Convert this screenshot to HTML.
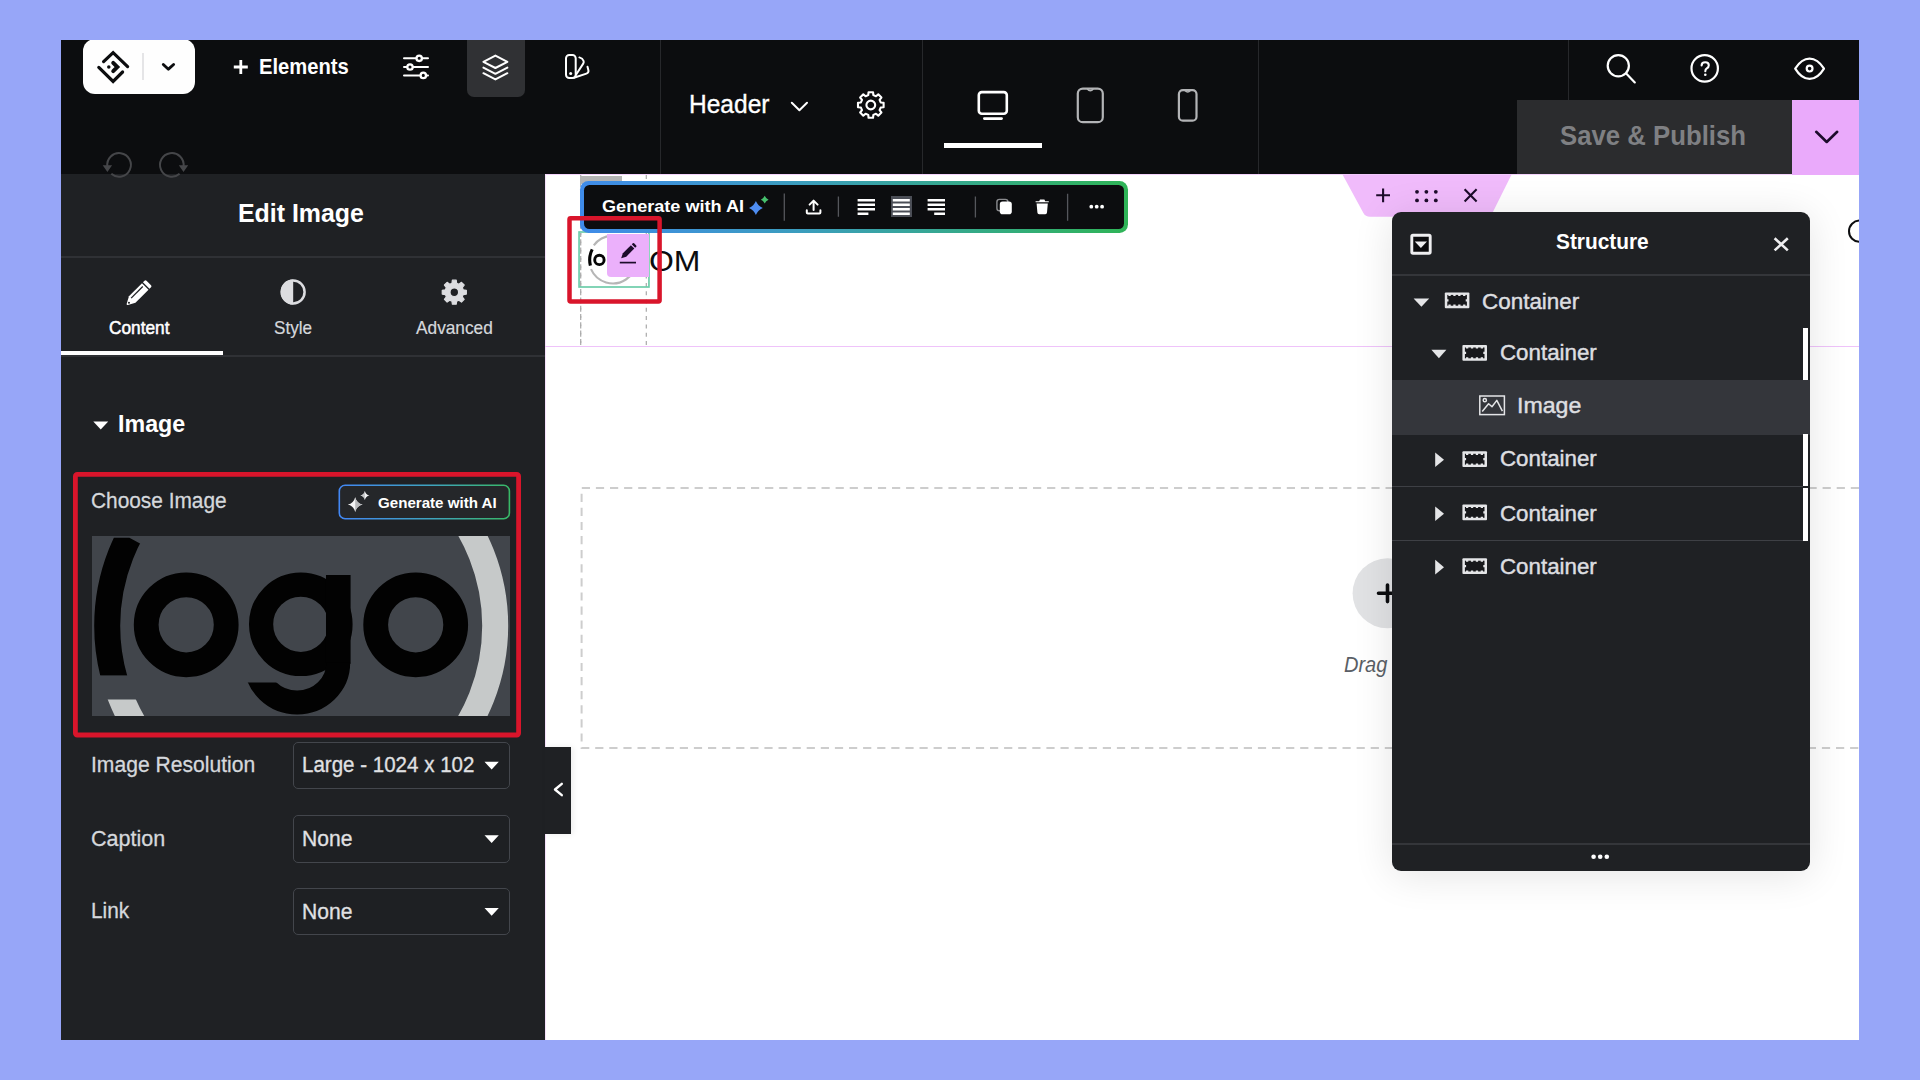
<!DOCTYPE html>
<html>
<head>
<meta charset="utf-8">
<style>
*{box-sizing:border-box;margin:0;padding:0}
html,body{width:1920px;height:1080px;overflow:hidden}
body{background:#97a6f8;font-family:"Liberation Sans",sans-serif;position:relative}
.a{position:absolute}
.t{position:absolute;white-space:nowrap;line-height:1}
svg{position:absolute;overflow:visible}
.vdiv{position:absolute;top:40px;width:1.3px;height:134px;background:#27282b}
</style>
</head>
<body>
<!-- base surfaces -->
<div class="a" style="left:61px;top:40px;width:1798px;height:1000px;background:#fff"></div>
<div class="a" id="topbar" style="left:61px;top:40px;width:1798px;height:134px;background:#0c0d0f"></div>
<!--CANVAS-->
<div class="a" style="left:545px;top:174px;width:1314px;height:1px;background:#f3d2fb"></div>
<div class="a" style="left:545px;top:174px;width:1px;height:866px;background:#f6e0fb"></div>
<div class="a" style="left:545px;top:345.5px;width:1314px;height:1.3px;background:#efc3fa"></div>
<!-- dashed add-section box -->
<svg style="left:0;top:0" width="1859" height="1080" viewBox="0 0 1859 1080">
 <path d="M1859 488 H581.6 V748 H1859" fill="none" stroke="#cdcdcd" stroke-width="2" stroke-dasharray="8.2 5.9"/>
 <!-- column guides -->
 <path d="M580.7 175 V346 M646.3 175 V346" fill="none" stroke="#a9a9a9" stroke-width="1.2" stroke-dasharray="4 4.3"/>
 <!-- plus circle -->
 <circle cx="1387.6" cy="593.3" r="35" fill="#e1e2e4"/>
 <path d="M1378.5 593.2H1396.6M1387.5 585V601.6" stroke="#0c0d0f" stroke-width="3.6" stroke-linecap="round" fill="none"/>
 <!-- right partial circle -->
</svg>
<svg style="left:1840px;top:210px;overflow:hidden" width="19" height="44" viewBox="1840 210 19 44"><circle cx="1859.6" cy="231.2" r="10.6" fill="#fff" stroke="#0c0d0f" stroke-width="2"/></svg>
<div class="t" style="left:1344.00px;top:654.25px;font-size:22.17px;font-weight:normal;font-style:italic;color:#5a5f66;transform:scaleX(0.9035);transform-origin:0 0;">Drag</div>
<!-- pink container handle -->
<svg style="left:0;top:0" width="1920" height="1080" viewBox="0 0 1920 1080">
 <path d="M1342.5 174.6 H1511.6 L1492.4 213 Q1490.4 216.8 1486 216.8 H1370 Q1365.4 216.8 1363.4 213Z" fill="#f0bbfb"/>
 <path d="M1383.1 188.4V202.2M1376.2 195.3H1390" stroke="#1d0c2b" stroke-width="2.1" fill="none"/>
 <g fill="#1d0c2b"><circle cx="1417" cy="191.8" r="1.9"/><circle cx="1426.4" cy="191.8" r="1.9"/><circle cx="1435.8" cy="191.8" r="1.9"/><circle cx="1417" cy="200.4" r="1.9"/><circle cx="1426.4" cy="200.4" r="1.9"/><circle cx="1435.8" cy="200.4" r="1.9"/></g>
 <path d="M1464.6 189.2L1476.6 201.4M1476.6 189.2L1464.6 201.4" stroke="#1d0c2b" stroke-width="2.1" fill="none"/>
</svg>
<!-- selection + mini logo -->
<svg style="left:0;top:0" width="1920" height="1080" viewBox="0 0 1920 1080"><rect x="579.05" y="232" width="69.9" height="55" fill="none" stroke="#6dcdaa" stroke-width="1.7"/></svg>
<svg style="left:0;top:0" width="1920" height="1080" viewBox="0 0 1920 1080">
 <g fill="none">
  <path d="M593.8 245.3 A23.8 23.8 0 1 1 591 269.2" stroke="#b6b6b6" stroke-width="2.1"/>
  <path d="M592.2 249.4 A23.4 23.4 0 0 0 590.4 265.6" stroke="#050505" stroke-width="3.1"/>
  <circle cx="599.4" cy="259.9" r="4.7" stroke="#050505" stroke-width="2.9"/>
 </g>
 <path d="M580.7 233 V346" fill="none" stroke="#a9a9a9" stroke-width="1.2" stroke-dasharray="4 4.3" stroke-dashoffset="2"/>
</svg>
<div class="a" style="left:606.8px;top:234.3px;width:42.7px;height:42.4px;background:#ebb0fb;border-radius:0 0 0 4px"></div>
<svg style="left:0;top:0" width="1920" height="1080" viewBox="0 0 1920 1080">
 <g transform="translate(628.1 251.4) rotate(45)" fill="#1d0c2b"><path d="M-2.4 -9.1 Q-2.4 -10 -1.5 -10 H1.5 Q2.4 -10 2.4 -9.1 V-7.6 H-2.4Z"/><path d="M-2.4 -6.4 H2.4 V5 L0 9.8 L-2.4 5Z"/></g>
 <path d="M619.8 262.6 H636" stroke="#1d0c2b" stroke-width="1.7" fill="none"/>
</svg>
<div class="t" style="left:648.74px;top:245.88px;font-size:30.14px;font-weight:normal;font-style:normal;color:#0c0d0f;transform:scaleX(1.0609);transform-origin:0 0;">OM</div>
<!-- element toolbar -->
<div class="a" style="left:580.3px;top:175.8px;width:42.2px;height:8px;background:#b4b4b4"></div>
<div class="a" style="left:580.3px;top:180.8px;width:547.3px;height:52.2px;border-radius:8.5px;background:linear-gradient(90deg,#3f8be9 0%,#3b9dbe 40%,#35a98a 70%,#2fb457 100%)"></div>
<div class="a" style="left:584px;top:184.8px;width:539.8px;height:44.3px;border-radius:5.5px;background:#0c0d0f"></div>
<div class="a" style="left:890.8px;top:196.3px;width:20.9px;height:20.8px;background:#4b4e56"></div>
<svg style="left:0;top:0" width="1920" height="1080" viewBox="0 0 1920 1080">
 <!-- dividers -->
 <path d="M784.3 193.4V220.8M1067.6 193.8V220.8" stroke="#55575c" stroke-width="1.3" fill="none"/>
 <path d="M838.4 196.6V216.8M975.4 196.4V217.5" stroke="#55575c" stroke-width="1.3" fill="none"/>
 <!-- sparkle -->
 <path d="M755.9 201.1 Q757.97 205.93 762.8 208 Q757.97 210.07 755.9 214.9 Q753.83 210.07 749.0 208 Q753.83 205.93 755.9 201.1Z" fill="#4e8df2"/>
 <path d="M764.7 195.79999999999998 Q765.87 198.53 768.6 199.7 Q765.87 200.87 764.7 203.6 Q763.53 200.87 760.8000000000001 199.7 Q763.53 198.53 764.7 195.79999999999998Z" fill="#46c06d"/>
 <!-- upload -->
 <g stroke="#fff" stroke-width="2" fill="none" stroke-linecap="round" stroke-linejoin="round"><path d="M813.6 210V201M809.6 204.6L813.6 200.6L817.6 204.6"/><path d="M806.8 210.2V212.4Q806.8 213.4 807.8 213.4H819.4Q820.4 213.4 820.4 212.4V210.2"/></g>
 <!-- align icons -->
 <g stroke="#fff" stroke-width="2.5" fill="none">
  <path d="M857.6 200.3H875M857.6 204.8H875M857.6 209.3H875M857.6 213.7H868.4"/>
  <path d="M892.8 200.3H909.8M892.8 204.8H909.8M892.8 209.3H909.8M892.8 213.7H909.8"/>
  <path d="M927.6 200.3H945M927.6 204.8H945M927.6 209.3H945M934.2 213.7H945"/>
 </g>
 <!-- copy -->
 <rect x="996.9" y="199.4" width="11" height="11.4" rx="2.6" fill="none" stroke="#8b8c8f" stroke-width="1.4"/>
 <rect x="999.8" y="201.6" width="12" height="12.6" rx="2.8" fill="#fff"/>
 <!-- trash -->
 <path d="M1035.6 202.3H1048.8V201.2H1045.2L1044.4 199.6H1040L1039.2 201.2H1035.6Z" fill="#fff"/>
 <path d="M1036.6 203.6H1047.8L1047 212.6Q1046.9 214.2 1045.3 214.2H1039.1Q1037.5 214.2 1037.4 212.6Z" fill="#fff"/>
 <!-- dots -->
 <g fill="#fff"><circle cx="1091.3" cy="206.7" r="1.9"/><circle cx="1096.7" cy="206.7" r="1.9"/><circle cx="1102.1" cy="206.7" r="1.9"/></g>
</svg>
<div class="t" style="left:601.70px;top:198.89px;font-size:16.96px;font-weight:bold;font-style:normal;color:#fff;transform:scaleX(1.0681);transform-origin:0 0;">Generate with AI</div>
<!-- red highlight around image -->
<svg style="left:0;top:0" width="1920" height="1080" viewBox="0 0 1920 1080"><rect x="569.5" y="218.3" width="90.1" height="83.1" rx="1.2" fill="none" stroke="#d9152b" stroke-width="4.5"/></svg>

<!--PANEL-->
<div class="a" id="panel" style="left:61px;top:174px;width:484px;height:866px;background:#1f2124"></div>
<div class="a" style="left:61px;top:256px;width:484px;height:1.5px;background:#2f3135"></div>
<div class="a" style="left:61px;top:355px;width:484px;height:1.5px;background:#2f3135"></div>
<div class="a" style="left:61px;top:350.6px;width:162px;height:4.6px;background:#fff"></div>
<!-- collapse handle -->
<div class="a" style="left:545px;top:747px;width:26.3px;height:87px;background:#1f2124;box-shadow:2px 0 6px rgba(0,0,0,.08)"></div>
<svg style="left:0;top:0" width="1920" height="1080" viewBox="0 0 1920 1080">
 <path d="M561.8 783.8 L555 789.5 L561.8 795.2" fill="none" stroke="#fff" stroke-width="2.4" stroke-linecap="round" stroke-linejoin="round"/>
 <!-- undo / redo -->
 <g fill="none" stroke="#454649" stroke-width="2">
  <path d="M107.4 166.6 A11.8 11.8 0 1 1 111.3 173.8"/>
  <path d="M183.5 166.6 A11.8 11.8 0 1 0 179.6 173.8"/>
 </g>
 <path d="M102.7 165.3 H112.1 L107.4 172Z M178.8 165.3 H188.2 L183.5 172Z" fill="#454649"/>
 <!-- tab icons -->
 <g transform="translate(138.3 293.4) rotate(45)" fill="#fff"><path d="M-3.2 -14.8 H3.2 Q4.6 -14.8 4.6 -13.4 V-11.2 H-4.6 V-13.4 Q-4.6 -14.8 -3.2 -14.8Z"/><path d="M-4.6 -9.8 H4.6 V8.6 L0.8 15.6 Q0 16.8 -0.8 15.6 L-4.6 8.6Z"/><path d="M-1.7 -8 V8.4" stroke="#1f2124" stroke-width="1.3" fill="none"/><circle cx="0" cy="13.2" r="1" fill="#1f2124"/></g>
 <g><circle cx="293.2" cy="292" r="11.4" fill="none" stroke="#dcdde0" stroke-width="2.5"/><path d="M293.2 279.4 A12.6 12.6 0 0 0 293.2 304.6Z" fill="#dcdde0"/></g>
 <g transform="translate(454.3 292.2)"><path d="M-1.91 -12.05 L1.91 -12.05 L2.36 -8.89 L4.62 -7.96 L7.17 -9.87 L9.87 -7.17 L7.96 -4.62 L8.89 -2.36 L12.05 -1.91 L12.05 1.91 L8.89 2.36 L7.96 4.62 L9.87 7.17 L7.17 9.87 L4.62 7.96 L2.36 8.89 L1.91 12.05 L-1.91 12.05 L-2.36 8.89 L-4.62 7.96 L-7.17 9.87 L-9.87 7.17 L-7.96 4.62 L-8.89 2.36 L-12.05 1.91 L-12.05 -1.91 L-8.89 -2.36 L-7.96 -4.62 L-9.87 -7.17 L-7.17 -9.87 L-4.62 -7.96 L-2.36 -8.89Z M4.3 0 A4.3 4.3 0 1 0 -4.3 0 A4.3 4.3 0 1 0 4.3 0Z" fill="#dcdde0" fill-rule="evenodd" stroke="#dcdde0" stroke-width="1.2" stroke-linejoin="round"/></g>
 <!-- section caret -->
 <path d="M93.3 421.4 H108.2 L100.75 429.6Z" fill="#fff"/>
</svg>
<div class="t" style="left:238.07px;top:200.03px;font-size:26.67px;font-weight:bold;font-style:normal;color:#fff;transform:scaleX(0.9341);transform-origin:0 0;">Edit Image</div>
<div class="t" style="left:108.80px;top:319.29px;font-size:18.84px;font-weight:normal;font-style:normal;color:#fff;transform:scaleX(0.9174);transform-origin:0 0;-webkit-text-stroke:0.55px #fff">Content</div>
<div class="t" style="left:274.40px;top:319.29px;font-size:18.84px;font-weight:normal;font-style:normal;color:#d5d8dc;transform:scaleX(0.9085);transform-origin:0 0;-webkit-text-stroke:0.2px #d5d8dc">Style</div>
<div class="t" style="left:416.30px;top:319.29px;font-size:18.84px;font-weight:normal;font-style:normal;color:#d5d8dc;transform:scaleX(0.9175);transform-origin:0 0;-webkit-text-stroke:0.2px #d5d8dc">Advanced</div>
<div class="t" style="left:117.60px;top:412.89px;font-size:23.19px;font-weight:bold;font-style:normal;color:#fff;transform:scaleX(1.0033);transform-origin:0 0;">Image</div>
<!--PANELBODY-->
<!-- red highlight box -->
<svg style="left:0;top:0" width="1920" height="1080" viewBox="0 0 1920 1080"><rect x="75.4" y="474.4" width="443.2" height="260.6" rx="1.8" fill="none" stroke="#d9152b" stroke-width="4.8"/></svg>
<!-- generate with AI button -->
<svg style="left:0;top:0" width="1920" height="1080" viewBox="0 0 1920 1080"><defs><linearGradient id="gbtn" x1="338" y1="0" x2="510" y2="0" gradientUnits="userSpaceOnUse"><stop offset="0" stop-color="#4287f5"/><stop offset=".55" stop-color="#3fa4bd"/><stop offset="1" stop-color="#38b866"/></linearGradient></defs><rect x="339.3" y="485.3" width="170.1" height="33.4" rx="5.8" fill="#25272a" stroke="url(#gbtn)" stroke-width="1.6"/></svg>
<!-- preview -->
<div class="a" style="left:91.8px;top:536.2px;width:418.2px;height:180.3px;background:#41454b;overflow:hidden">
 <svg style="left:0;top:0" width="418.2" height="180.3" viewBox="91.8 536.2 418.2 180.3">
  <defs>
   <clipPath id="cpR"><path d="M301 500 H560 V760 H301Z M60 699.8 H220 V760 H60Z"/></clipPath>
   <clipPath id="cpB"><path d="M60 537.9 H129.2 L139.8 543.8 L301 626 H250 V675.8 H60Z"/></clipPath>
   <clipPath id="cpG"><path d="M296.9 600 H420 V760 H200 V682.6 H296.9Z"/></clipPath>
  </defs>
  <g clip-path="url(#cpR)"><circle cx="301" cy="626" r="194" fill="none" stroke="#c6c9c9" stroke-width="26"/></g>
  <g clip-path="url(#cpB)"><circle cx="301" cy="626" r="194" fill="none" stroke="#020202" stroke-width="26"/></g>
  <g fill="none" stroke="#020202">
   <circle cx="186" cy="625" r="40" stroke-width="24.8"/>
   <circle cx="300.6" cy="624.5" r="39.7" stroke-width="24.2"/>
   <circle cx="415.5" cy="625" r="40" stroke-width="24.8"/>
   <path d="M338.1 575.2 V664" stroke-width="24.6"/>
   <g clip-path="url(#cpG)"><path d="M338.1 663 A41.2 39.7 0 0 1 255.7 663 V640" stroke-width="23.8"/></g>
  </g>
 </svg>
</div>
<svg style="left:0;top:0" width="1920" height="1080" viewBox="0 0 1920 1080">
 <!-- sparkle icon -->
 <path d="M355.2 497.20000000000005 Q356.68 503.12 362.59999999999997 504.6 Q356.68 506.08000000000004 355.2 512.0 Q353.71999999999997 506.08000000000004 347.8 504.6 Q353.71999999999997 503.12 355.2 497.20000000000005Z" fill="#f4f4f5"/><path d="M355.2 497.20000000000005 Q356.68 503.12 362.59999999999997 504.6 Q356.68 506.08000000000004 355.2 512.0Z" fill="#b9babc"/>
 <path d="M364.9 490.9 Q365.79999999999995 494.5 369.4 495.4 Q365.79999999999995 496.29999999999995 364.9 499.9 Q364.0 496.29999999999995 360.4 495.4 Q364.0 494.5 364.9 490.9Z" fill="#f4f4f5"/><path d="M364.9 490.9 Q364.0 494.5 360.4 495.4 Q364.0 496.29999999999995 364.9 499.9Z" fill="#c4c5c7"/>
</svg>
<div class="t" style="left:90.88px;top:490.08px;font-size:22.61px;font-weight:normal;font-style:normal;color:#d5d8dc;transform:scaleX(0.9224);transform-origin:0 0;-webkit-text-stroke:0.3px #d5d8dc">Choose Image</div>
<div class="t" style="left:378.30px;top:495.37px;font-size:15.22px;font-weight:bold;font-style:normal;color:#fff;transform:scaleX(0.9930);transform-origin:0 0;">Generate with AI</div>
<!-- selects -->
<div class="a" style="left:293px;top:741.7px;width:217px;height:47px;border:1.4px solid #43464c;border-radius:5px;background:#1e2023"></div>
<div class="a" style="left:293px;top:815.4px;width:217px;height:47.4px;border:1.4px solid #43464c;border-radius:5px;background:#1e2023"></div>
<div class="a" style="left:293px;top:888px;width:217px;height:47.2px;border:1.4px solid #43464c;border-radius:5px;background:#1e2023"></div>
<svg style="left:0;top:0" width="1920" height="1080" viewBox="0 0 1920 1080">
 <path d="M484.5 761.8 H498.8 L491.65 769.6Z M484.5 835.3 H498.8 L491.65 843.1Z M484.5 907.9 H498.8 L491.65 915.7Z" fill="#fff"/>
</svg>
<div class="t" style="left:90.58px;top:754.18px;font-size:22.03px;font-weight:normal;font-style:normal;color:#d5d8dc;transform:scaleX(0.9584);transform-origin:0 0;-webkit-text-stroke:0.3px #d5d8dc">Image Resolution</div>
<div class="t" style="left:90.84px;top:827.53px;font-size:22.32px;font-weight:normal;font-style:normal;color:#d5d8dc;transform:scaleX(0.9644);transform-origin:0 0;-webkit-text-stroke:0.3px #d5d8dc">Caption</div>
<div class="t" style="left:90.87px;top:900.43px;font-size:22.32px;font-weight:normal;font-style:normal;color:#d5d8dc;transform:scaleX(0.9324);transform-origin:0 0;-webkit-text-stroke:0.3px #d5d8dc">Link</div>
<div class="t" style="left:302.08px;top:754.03px;font-size:22.32px;font-weight:normal;font-style:normal;color:#e0e1e3;transform:scaleX(0.9204);transform-origin:0 0;-webkit-text-stroke:0.3px #e0e1e3">Large - 1024 x 102</div>
<div class="t" style="left:302.06px;top:827.53px;font-size:22.32px;font-weight:normal;font-style:normal;color:#e0e1e3;transform:scaleX(0.9441);transform-origin:0 0;-webkit-text-stroke:0.3px #e0e1e3">None</div>
<div class="t" style="left:302.06px;top:900.73px;font-size:22.32px;font-weight:normal;font-style:normal;color:#e0e1e3;transform:scaleX(0.9441);transform-origin:0 0;-webkit-text-stroke:0.3px #e0e1e3">None</div>


<!--TOPBAR-->
<div class="vdiv" style="left:660px"></div>
<div class="vdiv" style="left:922px"></div>
<div class="vdiv" style="left:1257.5px"></div>
<div class="vdiv" style="left:1567.5px;height:60px"></div>
<!-- logo box -->
<div class="a" style="left:83px;top:40px;width:112px;height:55px;overflow:hidden"><div class="a" style="left:0;top:-1.4px;width:112px;height:55.7px;background:#fefefe;border-radius:12px"></div></div>
<div class="a" style="left:142px;top:53px;width:2.4px;height:27px;background:#e5e5e7"></div>
<!-- layers active bg -->
<div class="a" style="left:467px;top:40px;width:58.3px;height:56.7px;background:#303134;border-radius:0 0 7px 7px"></div>
<!-- save & publish -->
<div class="a" style="left:1517px;top:100px;width:274.5px;height:74px;background:#2b2c2e"></div>
<div class="a" style="left:1791.5px;top:100px;width:67.5px;height:74.6px;background:#eaaafb"></div>
<!-- desktop underline -->
<div class="a" style="left:943.7px;top:143.4px;width:98.3px;height:4.6px;background:#fff"></div>
<svg style="left:0;top:0" width="1920" height="1080" viewBox="0 0 1920 1080">
 <!-- logo mark -->
 <g fill="none" stroke="#0c0d0f" stroke-linecap="round" stroke-linejoin="miter">
  <path d="M103.6 61.6 L113.1 52.6 L127.6 66.6" stroke-width="3.2"/>
  <path d="M98.8 67.4 L113.1 81.4 L122.6 72.0" stroke-width="3.2"/>
  <path d="M113.2 62.8 L117.4 67 L113.2 71.2" stroke-width="3.9" stroke-linejoin="miter"/>
 </g>
 <circle cx="108.8" cy="67" r="1.75" fill="#0c0d0f"/>
 <path d="M163.3 64.5 L168.4 69.2 L173.6 64.5" fill="none" stroke="#0c0d0f" stroke-width="2.9" stroke-linecap="round" stroke-linejoin="round"/>
 <!-- plus -->
 <path d="M240.8 60V74M233.8 67H247.8" stroke="#fff" stroke-width="2.8" fill="none"/>
 <!-- sliders -->
 <g stroke="#fff" stroke-width="2" fill="#0c0d0f" stroke-linecap="round">
  <path d="M404 58.3H428M404 67H428M404 75.4H428" fill="none"/>
  <circle cx="419.2" cy="58.3" r="2.7" stroke-width="2.3"/><circle cx="410" cy="67" r="2.7" stroke-width="2.3"/><circle cx="423.3" cy="75.4" r="2.7" stroke-width="2.3"/>
 </g>
 <!-- layers -->
 <g stroke="#fff" stroke-width="2" fill="none" stroke-linejoin="round" stroke-linecap="round">
  <path d="M495.4 55.6 L507.4 61.8 L495.4 68 L483.4 61.8Z"/>
  <path d="M483.4 67.6 L495.4 73.8 L507.4 67.6"/>
  <path d="M483.4 73.2 L495.4 79.4 L507.4 73.2"/>
 </g>
 <!-- swatches -->
 <g stroke="#fff" stroke-width="2" fill="none" stroke-linejoin="round" stroke-linecap="round">
  <rect x="566" y="55" width="9.7" height="23" rx="3.3"/>
  <path d="M579.4 57.4 Q582.6 58.2 583.6 61 Q584 62.4 583.2 63.6 L576 74.8"/>
  <path d="M587.5 66.8 L588.4 70.2 Q588.9 72.7 586.4 73.6 L574 77.8"/>
 </g>
 <circle cx="570.7" cy="73.6" r="1.5" fill="#fff"/>
 <!-- header chevron -->
 <path d="M791.8 102.8 L799.4 110.2 L807 102.8" fill="none" stroke="#fff" stroke-width="2" stroke-linecap="round" stroke-linejoin="round"/>
 <!-- gear -->
 <g transform="translate(870.8 105)" fill="none" stroke="#fff" stroke-width="2.1" stroke-linejoin="round">
  <path d="M12.81 -2.24 L12.81 2.24 L9.88 2.54 L8.78 5.19 L10.64 7.48 L7.48 10.64 L5.19 8.78 L2.54 9.88 L2.24 12.81 L-2.24 12.81 L-2.54 9.88 L-5.19 8.78 L-7.48 10.64 L-10.64 7.48 L-8.78 5.19 L-9.88 2.54 L-12.81 2.24 L-12.81 -2.24 L-9.88 -2.54 L-8.78 -5.19 L-10.64 -7.48 L-7.48 -10.64 L-5.19 -8.78 L-2.54 -9.88 L-2.24 -12.81 L2.24 -12.81 L2.54 -9.88 L5.19 -8.78 L7.48 -10.64 L10.64 -7.48 L8.78 -5.19 L9.88 -2.54Z"/><circle r="4.4"/>
 </g>
 <!-- desktop -->
 <g stroke="#fff" stroke-width="2.6" fill="none" stroke-linecap="round">
  <rect x="978.8" y="92.1" width="28" height="21.6" rx="3"/>
  <path d="M984.3 118.6H1001.6"/>
 </g>
 <!-- tablet -->
 <g stroke="#b3b4b6" stroke-width="2.2" fill="none">
  <rect x="1077.8" y="88.6" width="25" height="33.6" rx="5"/>
  <path d="M1087.3 89 Q1090.3 92.4 1093.3 89" stroke-width="1.6"/>
 </g>
 <!-- mobile -->
 <g stroke="#b3b4b6" stroke-width="2.2" fill="none">
  <rect x="1178.9" y="90.1" width="17.6" height="30.6" rx="4"/>
  <path d="M1185 90.5 Q1187.7 93.4 1190.4 90.5" stroke-width="1.6"/>
 </g>
 <!-- search -->
 <g stroke="#fff" stroke-width="2.2" fill="none" stroke-linecap="round">
  <circle cx="1618.3" cy="65.7" r="10.6"/><path d="M1626.2 73.6 L1634.8 82.4"/>
 </g>
 <!-- help -->
 <circle cx="1704.7" cy="68.4" r="13.2" stroke="#fff" stroke-width="2.2" fill="none"/>
 <path d="M1701.6 65.4 Q1701.6 62.2 1705.2 62.2 Q1708.8 62.2 1708.8 65.2 Q1708.8 67.2 1706.8 68.4 Q1705.3 69.4 1705.3 71.2" stroke="#fff" stroke-width="2.1" fill="none" stroke-linecap="round"/>
 <circle cx="1705.3" cy="74.7" r="1.3" fill="#fff"/>
 <!-- eye -->
 <g stroke="#fff" stroke-width="2.2" fill="none" stroke-linejoin="round">
  <path d="M1795.2 68.6 Q1801.5 58.6 1809.6 58.6 Q1817.7 58.6 1824 68.6 Q1817.7 78.9 1809.6 78.9 Q1801.5 78.9 1795.2 68.6Z"/>
  <circle cx="1809.6" cy="68.6" r="2.9"/>
 </g>
 <!-- publish chevron -->
 <path d="M1816.2 131.8 L1826.7 142 L1837.2 131.8" fill="none" stroke="#1d0c2b" stroke-width="2.6" stroke-linecap="round" stroke-linejoin="round"/>
</svg>
<div class="t" style="left:258.59px;top:55.53px;font-size:22.32px;font-weight:bold;font-style:normal;color:#fff;transform:scaleX(0.9055);transform-origin:0 0;">Elements</div>
<div class="t" style="left:688.92px;top:91.43px;font-size:26.09px;font-weight:normal;font-style:normal;color:#fff;transform:scaleX(0.9410);transform-origin:0 0;-webkit-text-stroke:0.35px #fff">Header</div>
<div class="t" style="left:1560.40px;top:121.75px;font-size:27.83px;font-weight:bold;font-style:normal;color:#7f8083;transform:scaleX(0.9253);transform-origin:0 0;">Save &amp; Publish</div>

<!--STRUCTURE-->
<div class="a" style="left:1391.6px;top:212px;width:418.4px;height:659px;border-radius:9px;background:#1f2124;box-shadow:0 4px 40px rgba(0,0,0,.11)"></div>
<div class="a" style="left:1392px;top:274.4px;width:418px;height:1.4px;background:#34363a"></div>
<div class="a" style="left:1392px;top:380px;width:418px;height:54.6px;background:#34363b"></div>
<div class="a" style="left:1392px;top:485.8px;width:411px;height:1.5px;background:#3e4045"></div>
<div class="a" style="left:1392px;top:539.8px;width:411px;height:1.5px;background:#3e4045"></div>
<div class="a" style="left:1392px;top:843.2px;width:418px;height:1.4px;background:#34363a"></div>
<div class="a" style="left:1803.2px;top:328.2px;width:4.8px;height:51.8px;background:#fff"></div>
<div class="a" style="left:1803.2px;top:434.4px;width:4.8px;height:51.6px;background:#fff"></div>
<div class="a" style="left:1803.2px;top:487.6px;width:4.8px;height:53px;background:#fff"></div>
<svg style="left:0;top:0" width="1920" height="1080" viewBox="0 0 1920 1080">
 <!-- header icon -->
 <rect x="1411.8" y="235.3" width="18.4" height="18" rx="1.2" fill="#0b0b0d" stroke="#eeeef0" stroke-width="2.9"/>
 <path d="M1414.8 241.6 H1427 L1420.9 248Z" fill="#eeeef0"/>
 <!-- close -->
 <path d="M1774.6 238.2 L1787.8 250.4 M1787.8 238.2 L1774.6 250.4" stroke="#eeeef0" stroke-width="2.6" fill="none"/>
 <path d="M1413.6 298.4 H1429.2 L1421.4 306.8Z" fill="#e4e5e7"/><g transform="translate(1444.8 292.4)"><rect x="0" y="0" width="24.6" height="15.8" rx="1" fill="#e4e5e7"/><rect x="2.5" y="2.5" width="19.6" height="10.8" fill="#17181b"/><path d="M3.6 2.5H21M3.6 13.3H21" fill="none" stroke="#e4e5e7" stroke-width="2.2" stroke-dasharray="2.3 2.6"/><path d="M2.5 6.8V9M22.1 6.8V9" fill="none" stroke="#e4e5e7" stroke-width="2.4"/></g><path d="M1431.4 349.8 H1446.4 L1438.9 358.2Z" fill="#e4e5e7"/><g transform="translate(1462.4 345)"><rect x="0" y="0" width="24.6" height="15.8" rx="1" fill="#e4e5e7"/><rect x="2.5" y="2.5" width="19.6" height="10.8" fill="#17181b"/><path d="M3.6 2.5H21M3.6 13.3H21" fill="none" stroke="#e4e5e7" stroke-width="2.2" stroke-dasharray="2.3 2.6"/><path d="M2.5 6.8V9M22.1 6.8V9" fill="none" stroke="#e4e5e7" stroke-width="2.4"/></g><path d="M1435.2 452.4 V467 L1444 459.7Z" fill="#e4e5e7"/><g transform="translate(1462.4 451.3)"><rect x="0" y="0" width="24.6" height="15.8" rx="1" fill="#e4e5e7"/><rect x="2.5" y="2.5" width="19.6" height="10.8" fill="#17181b"/><path d="M3.6 2.5H21M3.6 13.3H21" fill="none" stroke="#e4e5e7" stroke-width="2.2" stroke-dasharray="2.3 2.6"/><path d="M2.5 6.8V9M22.1 6.8V9" fill="none" stroke="#e4e5e7" stroke-width="2.4"/></g><path d="M1435.2 506.4 V521 L1444 513.7Z" fill="#e4e5e7"/><g transform="translate(1462.4 504.5)"><rect x="0" y="0" width="24.6" height="15.8" rx="1" fill="#e4e5e7"/><rect x="2.5" y="2.5" width="19.6" height="10.8" fill="#17181b"/><path d="M3.6 2.5H21M3.6 13.3H21" fill="none" stroke="#e4e5e7" stroke-width="2.2" stroke-dasharray="2.3 2.6"/><path d="M2.5 6.8V9M22.1 6.8V9" fill="none" stroke="#e4e5e7" stroke-width="2.4"/></g><path d="M1435.2 559.8 V574.6 L1444 567.2Z" fill="#e4e5e7"/><g transform="translate(1462.4 558.2)"><rect x="0" y="0" width="24.6" height="15.8" rx="1" fill="#e4e5e7"/><rect x="2.5" y="2.5" width="19.6" height="10.8" fill="#17181b"/><path d="M3.6 2.5H21M3.6 13.3H21" fill="none" stroke="#e4e5e7" stroke-width="2.2" stroke-dasharray="2.3 2.6"/><path d="M2.5 6.8V9M22.1 6.8V9" fill="none" stroke="#e4e5e7" stroke-width="2.4"/></g>
 <!-- image icon -->
 <g fill="none" stroke="#e4e5e7" stroke-width="1.5"><rect x="1479.8" y="396" width="24.6" height="18.6"/><path d="M1482.2 411.4 L1488.6 403.8 L1492 406.8 L1496.8 400.4 L1502.4 411.2" stroke-linejoin="round"/><circle cx="1484.8" cy="400.2" r="1.6"/></g>
 <!-- bottom dots -->
 <g fill="#fff"><circle cx="1593.6" cy="856.8" r="2.3"/><circle cx="1600.2" cy="856.8" r="2.3"/><circle cx="1606.8" cy="856.8" r="2.3"/></g>
</svg>
<div class="t" style="left:1555.80px;top:230.44px;font-size:22.90px;font-weight:bold;font-style:normal;color:#fff;transform:scaleX(0.9112);transform-origin:0 0;">Structure</div>
<div class="t" style="left:1482.31px;top:290.68px;font-size:22.61px;font-weight:normal;font-style:normal;color:#dddee0;transform:scaleX(0.9924);transform-origin:0 0;-webkit-text-stroke:0.45px #dddee0">Container</div>
<div class="t" style="left:1500.31px;top:341.88px;font-size:22.61px;font-weight:normal;font-style:normal;color:#dddee0;transform:scaleX(0.9873);transform-origin:0 0;-webkit-text-stroke:0.45px #dddee0">Container</div>
<div class="t" style="left:1516.63px;top:395.43px;font-size:22.32px;font-weight:normal;font-style:normal;color:#dddee0;transform:scaleX(1.0374);transform-origin:0 0;-webkit-text-stroke:0.45px #dddee0">Image</div>
<div class="t" style="left:1500.31px;top:447.98px;font-size:22.61px;font-weight:normal;font-style:normal;color:#dddee0;transform:scaleX(0.9873);transform-origin:0 0;-webkit-text-stroke:0.45px #dddee0">Container</div>
<div class="t" style="left:1500.31px;top:502.68px;font-size:22.61px;font-weight:normal;font-style:normal;color:#dddee0;transform:scaleX(0.9873);transform-origin:0 0;-webkit-text-stroke:0.45px #dddee0">Container</div>
<div class="t" style="left:1500.31px;top:556.18px;font-size:22.61px;font-weight:normal;font-style:normal;color:#dddee0;transform:scaleX(0.9873);transform-origin:0 0;-webkit-text-stroke:0.45px #dddee0">Container</div>

</body>
</html>
